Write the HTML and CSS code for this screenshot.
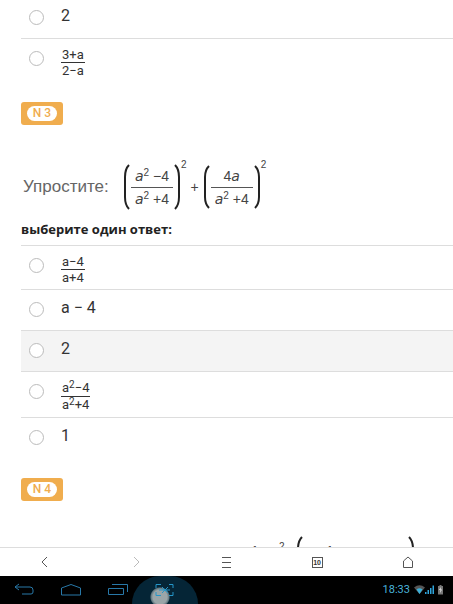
FILE: index.html
```
<!DOCTYPE html>
<html lang="ru">
<head>
	<meta charset="UTF-8">
	<meta name="viewport" content="width=device-width, initial-scale=1">
	<title>Тест</title>
	<link rel="stylesheet" href="styles.css">
</head>
<body>
	<main class="test">
		<div class="answers scrolled">
			<label class="answer"><input type="radio" name="q2"><span>2</span></label>
			<label class="answer"><input type="radio" name="q2"><span class="frac"><span>3+a</span><span>2−a</span></span></label>
		</div>

		<div class="number"><span>N 3</span></div>
		<div class="formula">
			<span class="task">Упростите:</span>
			<svg class="paren" viewBox="0 0 7 46"><path d="M6 1Q2 5 2 13V33Q2 41 6 45"/></svg>
			<span class="mfrac"><span><i>a</i><sup>2</sup> −4</span><span><i>a</i><sup>2</sup> +4</span></span>
			<svg class="paren" viewBox="0 0 7 46"><path d="M1 1Q5 5 5 13V33Q5 41 1 45"/></svg>
			<span class="power">2</span>
			<span class="plus">+</span>
			<svg class="paren" viewBox="0 0 7 46"><path d="M6 2Q2 6 2 13V33Q2 40 6 44"/></svg>
			<span class="mfrac"><span>4<i>a</i></span><span><i>a</i><sup>2</sup> +4</span></span>
			<svg class="paren" viewBox="0 0 7 46"><path d="M1 2Q5 6 5 13V33Q5 40 1 44"/></svg>
			<span class="power">2</span>
		</div>
		<h4>выберите один ответ:</h4>
		<div class="answers">
			<label class="answer"><input type="radio" name="q3"><span class="frac"><span>a−4</span><span>a+4</span></span></label>
			<label class="answer"><input type="radio" name="q3"><span>a − 4</span></label>
			<label class="answer active"><input type="radio" name="q3"><span>2</span></label>
			<label class="answer"><input type="radio" name="q3"><span class="frac high"><span>a<sup>2</sup>−4</span><span>a<sup>2</sup>+4</span></span></label>
			<label class="answer"><input type="radio" name="q3"><span>1</span></label>
		</div>

		<div class="number"><span>N 4</span></div>
		<div class="formula next">
			<span class="one">1</span>
			<span class="two">2</span>
			<svg class="paren" viewBox="0 0 7 46"><path d="M6 1Q2 5 2 13V33Q2 41 6 45"/></svg>
			<span class="one inner">1</span>
			<svg class="paren" viewBox="0 0 7 46"><path d="M1 1Q5 5 5 13V33Q5 41 1 45"/></svg>
		</div>
	</main>

	<nav class="browser">
		<button aria-label="Назад"><svg width="14" height="14" viewBox="0 0 14 14"><path d="M9 2L4 7l5 5"/></svg></button>
		<button class="off" aria-label="Вперёд"><svg width="14" height="14" viewBox="0 0 14 14"><path d="M5 2l5 5-5 5"/></svg></button>
		<button aria-label="Меню"><svg width="14" height="14" viewBox="0 0 14 14"><path d="M3 2.5h9M3 7.5h9M3 12.5h9"/></svg></button>
		<button aria-label="Вкладки"><span class="tabs">10</span></button>
		<button aria-label="Домой"><svg width="14" height="14" viewBox="0 0 14 14"><path d="M2.500 12.500V6L7 2l4.500 4v6.500z"/></svg></button>
	</nav>

	<footer class="system">
		<button aria-label="Назад"><svg width="22" height="14" viewBox="0 0 22 14"><path d="M6 1L2 4l4 3M2 4h15q3 0 3 3v2q0 2-2 2H9"/></svg></button>
		<button aria-label="Домой"><svg width="22" height="14" viewBox="0 0 22 14"><path d="M1.500 12V5L11 1.500 20.500 5v7z"/></svg></button>
		<button aria-label="Приложения"><svg width="22" height="14" viewBox="0 0 22 14"><path d="M1.500 5.500h15v6h-15zM5 1.500h15.500V9"/></svg></button>
		<button class="shot" aria-label="Снимок экрана"><svg width="22" height="14" viewBox="0 0 22 14"><path d="M2 5V1.500h5M15 1.500h4V5M19 9v3.500h-4M7 12.500H2V9M5 7h11M8 4l3 3-3 3M14 4l-3 3 3 3"/></svg></button>
		<div class="status">
			<time>18:33</time>
			<svg width="31" height="12" viewBox="0 0 31 12">
				<path fill="#555" d="M0 3.500Q5.500-1 11 3.500L5.500 10z"/>
				<path fill="#3cb0d8" d="M2.500 5.500Q5.500 3 8.500 5.500L5.500 10z"/>
				<path fill="#2fa5dc" d="M11 8h1.500v2H11zM13.500 6H15v4h-1.500zM16 4h1.500v6H16zM18.500 1.500H20V10h-1.500z"/>
				<path fill="#777" d="M24 2h1.500V1h2v1H29v8.500h-5z"/>
				<path fill="#eee" d="M27 3l-2 3h1.500L26 9l2-3.500h-1.500z"/>
			</svg>
		</div>
	</footer>
</body>
</html>
```
FILE: styles.css
```
*{margin:0; padding:0; box-sizing:border-box;}
body{display:flex; flex-direction:column; height:100vh; overflow:hidden; background:#fff; color:#333; font:16px/20px Roboto, "Liberation Sans", sans-serif;}
button{border:0; background:none; display:flex; align-items:center; justify-content:center;}
svg{fill:none; display:block;}

.test{flex:1; min-height:0; overflow:hidden; padding-left:21px;}

/* answers */
.answers{margin-bottom:20px;}
.answers.scrolled{margin-top:-3px;}
.answer{display:flex; align-items:flex-start; gap:17px; min-height:41px; padding:8px 0 4px 8px; border-top:1px solid #ddd;}
.answer.active{background:#f4f4f4;}
.answer input{appearance:none; width:15px; height:15px; margin-top:4px; border:1px solid #bbb; border-radius:50%; background:#fff;}
.frac{display:flex; flex-direction:column; font-size:13px; line-height:15px; text-align:center;}
.frac span{padding:0 1px;}
.frac span + span{border-top:1px solid #333;}
.frac.high{line-height:16px;}
.frac sup{font-size:10px; line-height:0; vertical-align:4px;}

.number{display:flex; align-items:center; justify-content:center; width:42px; height:23px; border-radius:3px; background:#f0ad4e;}
.number span{padding:0 6px; border-radius:8px; background:#fff; color:#f0ad4e; font-size:12px; font-weight:500; line-height:15px;}

/* formulas */
.formula{display:flex; align-items:center; height:94px; padding:33px 0 3px 2px; color:#444; font:14px/22px "Liberation Sans", sans-serif;}
.task{width:100px; font-size:17px; color:#666;}
.paren{flex:none; width:7px; height:46px; stroke:#222; stroke-width:2;}
.mfrac{width:42px; margin:0 1px; text-align:center; white-space:nowrap;}
.mfrac span{display:block;}
.mfrac span + span{border-top:1px solid #555;}
.mfrac i{font-family:"DejaVu Sans", sans-serif;}
.mfrac sup{font-size:10px; line-height:0; vertical-align:5px;}
.power{align-self:flex-start; font-size:10px; line-height:14px;}
.plus{padding:0 4px;}
h4{font:bold 13px/20px "Open Sans", "Noto Sans", sans-serif; color:#222; margin-bottom:6px;}

.next{align-items:flex-start; padding-top:35px; padding-left:230px;}
.one{width:28px; padding-top:4px;}
.two{width:17px; font-size:10px;}
.one.inner{width:105px; padding-left:23px;}

/* browser toolbar */
.browser{display:flex; flex:none; height:29px; border-top:1px solid #ddd; background:#fff;}
.browser button{flex:1; stroke:#555;}
.browser .off{stroke:#bbb;}
.tabs{width:11px; height:11px; border:1px solid #555; color:#333; font:bold 7px/9px "Liberation Sans", sans-serif; text-align:center;}

/* android bar */
.system{display:flex; flex:none; height:28px; overflow:hidden; background:#000; stroke:#2878a8;}
.system button{width:47px; height:28px;}
.system .shot{width:66px; margin-left:-9px; stroke:#2596c8; background:radial-gradient(circle 11px at 28px 21px, #9aa5a8 0 7px, #607780 9px, transparent 10px), #052536; border-radius:33px 33px 0 0;}
.status{display:flex; align-items:center; gap:4px; margin-left:auto; padding-right:8px; color:#4ab4dc; font-size:11px; stroke:none;}
```
